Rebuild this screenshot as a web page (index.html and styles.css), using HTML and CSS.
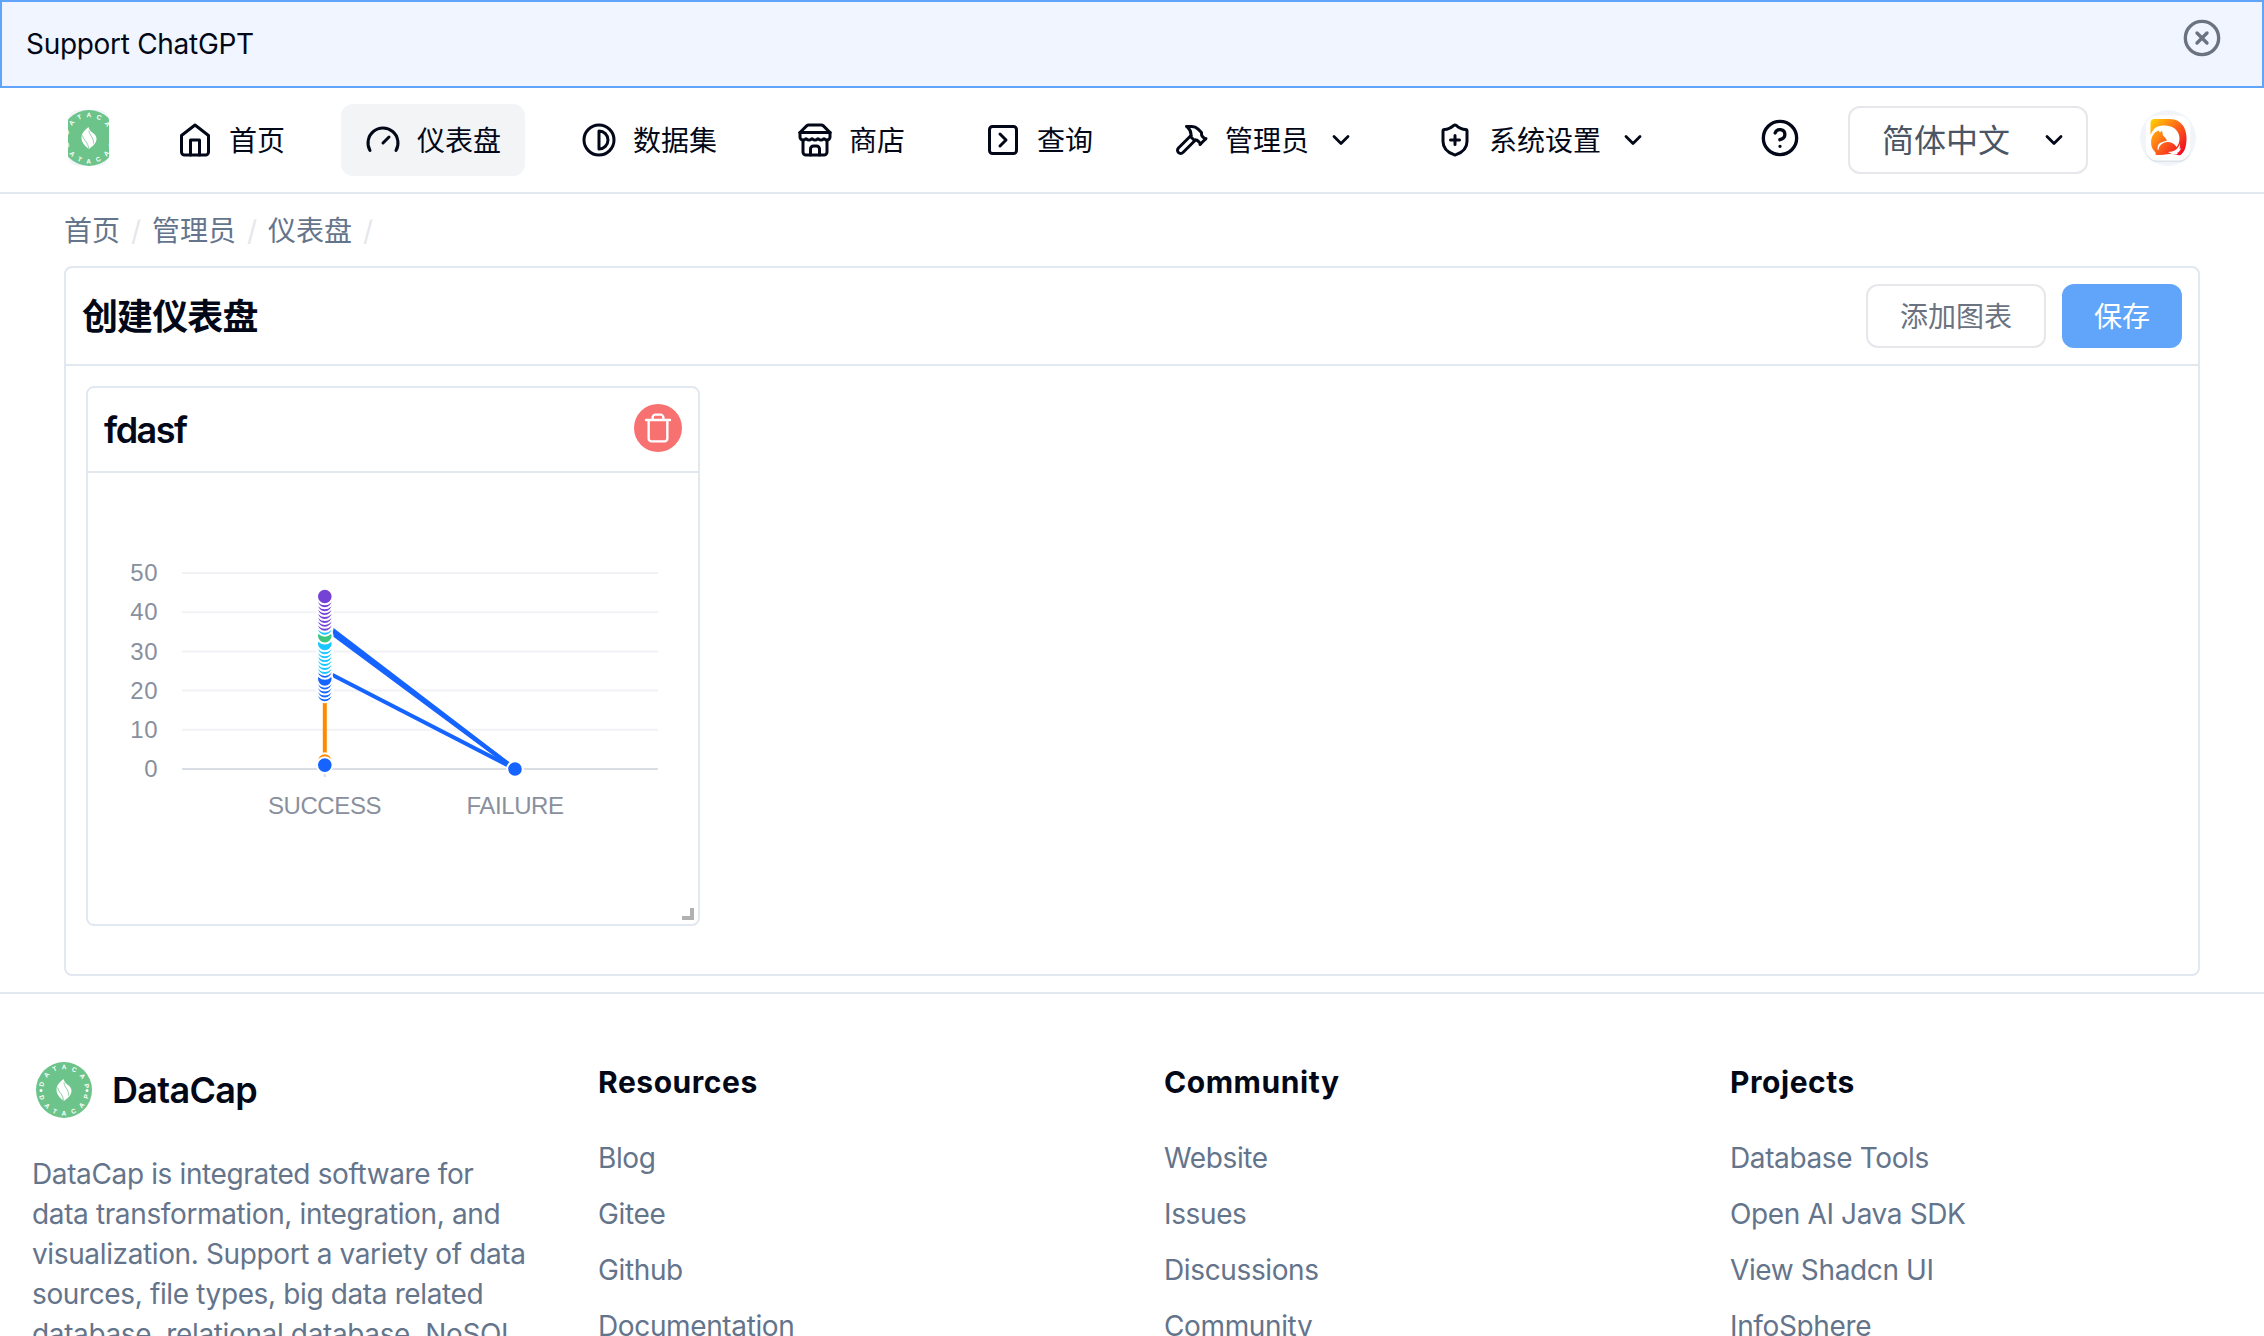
FILE: index.html
```html
<!DOCTYPE html>
<html lang="zh-CN">
<head>
<meta charset="utf-8">
<title>DataCap</title>
<link rel="stylesheet" href="styles.css">
</head>
<body>
<svg class="defs" width="0" height="0" aria-hidden="true">
  <symbol id="logo" viewBox="0 0 56 56">
    <circle cx="28" cy="28" r="28" fill="#6cc48a"/>
    <path id="arc-top" d="M7.2 28a20.8 20.8 0 0 1 41.6 0" fill="none"/>
    <path id="arc-bottom" d="M2.5 28a25.5 25.5 0 0 0 51 0" fill="none"/>
    <text class="logo-ring"><textPath href="#arc-top" startOffset="3" textLength="60">DATACAP</textPath></text>
    <text class="logo-ring"><textPath href="#arc-bottom" startOffset="6" textLength="68">DATACAP</textPath></text>
    <circle cx="5" cy="28.5" r="1.5" fill="#fff"/><circle cx="51" cy="28.5" r="1.5" fill="#fff"/>
    <path d="M27.500 17c-3 2.500-7 6-7 10.500 0 5 3 8 7.500 11.500 3-2.500 7.500-5.500 7.500-10 0-3-1.500-4.500-3.200-5.700-2.300-1.600-4-3.300-4.800-6.300z" fill="#fff"/>
    <path d="M21.500 25.500c1 5 6 7 6 13M28 20.500c0 5 5 6.500 4.500 13" fill="none" stroke="#6cc48a" stroke-width=".8"/>
  </symbol>
  <symbol id="chevron" viewBox="0 0 24 24"><path d="m6 9 6 6 6-6"/></symbol>
</svg>

<div class="banner">
  <span>Support ChatGPT</span>
  <svg class="icon icon-close" viewBox="0 0 24 24"><circle cx="12" cy="12" r="10"/><path d="m15 9-6 6M9 9l6 6"/></svg>
</div>

<header class="topbar">
  <div class="brand"><svg viewBox="0 0 56 56"><use href="#logo"/></svg></div>
  <nav class="nav">
    <a class="nav-item"><svg class="icon" viewBox="0 0 24 24"><path d="m3 9 9-7 9 7v11a2 2 0 0 1-2 2H5a2 2 0 0 1-2-2z"/><path d="M9 22V12h6v10"/></svg>首页</a>
    <a class="nav-item active"><svg class="icon" viewBox="0 0 24 24"><path d="m12 14 4-4"/><path d="M3.340 19a10 10 0 1 1 17.320 0"/></svg>仪表盘</a>
    <a class="nav-item"><svg class="icon" viewBox="0 0 24 24"><circle cx="12" cy="12" r="10"/><path d="M12 18a6 6 0 0 0 0-12v12z"/></svg>数据集</a>
    <a class="nav-item"><svg class="icon" viewBox="0 0 24 24"><path d="m2 7 4.410-4.410A2 2 0 0 1 7.830 2h8.340a2 2 0 0 1 1.420.59L22 7"/><path d="M4 12v8a2 2 0 0 0 2 2h12a2 2 0 0 0 2-2v-8"/><path d="M15 22v-4a2 2 0 0 0-2-2h-2a2 2 0 0 0-2 2v4"/><path d="M2 7h20"/><path d="M22 7v3a2 2 0 0 1-2 2a2.700 2.700 0 0 1-1.590-.63.7.7 0 0 0-.82 0A2.700 2.700 0 0 1 16 12a2.700 2.700 0 0 1-1.590-.63.7.7 0 0 0-.82 0A2.700 2.700 0 0 1 12 12a2.700 2.700 0 0 1-1.590-.63.7.7 0 0 0-.82 0A2.700 2.700 0 0 1 8 12a2.700 2.700 0 0 1-1.590-.63.7.7 0 0 0-.82 0A2.700 2.700 0 0 1 4 12a2 2 0 0 1-2-2V7"/></svg>商店</a>
    <a class="nav-item"><svg class="icon" viewBox="0 0 24 24"><rect width="18" height="18" x="3" y="3" rx="2"/><path d="m10 8 4 4-4 4"/></svg>查询</a>
    <a class="nav-item"><svg class="icon" viewBox="0 0 24 24"><path d="m15 12-8.373 8.373a1 1 0 1 1-3-3L12 9"/><path d="m18 15 4-4"/><path d="m21.500 11.500-1.914-1.914A2 2 0 0 1 19 8.172V7l-2.260-2.260a6 6 0 0 0-4.202-1.756L9 2.960l.92.82A6.180 6.180 0 0 1 12 8.400V10l2 2h1.172a2 2 0 0 1 1.414.586L18.500 14.500"/></svg>管理员<svg class="icon caret"><use href="#chevron"/></svg></a>
    <a class="nav-item"><svg class="icon" viewBox="0 0 24 24"><path d="M20 13c0 5-3.500 7.500-7.660 8.950a1 1 0 0 1-.67-.01C7.500 20.500 4 18 4 13V6a1 1 0 0 1 1-1c2 0 4.500-1.200 6.240-2.720a1.170 1.170 0 0 1 1.520 0C14.510 3.810 17 5 19 5a1 1 0 0 1 1 1z"/><path d="M9 12h6M12 9v6"/></svg>系统设置<svg class="icon caret"><use href="#chevron"/></svg></a>
  </nav>
  <div class="tools">
    <svg class="icon icon-help" viewBox="0 0 24 24"><circle cx="12" cy="12" r="10"/><path d="M9.090 9a3 3 0 0 1 5.830 1c0 2-3 3-3 3M12 17h.01"/></svg>
    <div class="select"><span>简体中文</span><svg class="icon caret"><use href="#chevron"/></svg></div>
    <svg class="avatar" viewBox="0 0 56 56">
      <defs><linearGradient id="fox" gradientUnits="userSpaceOnUse" x1="11" y1="10" x2="46" y2="40"><stop offset="0" stop-color="#ffd000"/><stop offset=".5" stop-color="#ff6a1a"/><stop offset="1" stop-color="#ee0a24"/></linearGradient></defs>
      <circle cx="28" cy="28" r="28" fill="#f1f5f9"/>
      <rect x="5.500" y="7" width="45" height="45" rx="12" fill="#dde2e8"/>
      <rect x="5.500" y="5.500" width="45" height="45" rx="12" fill="#fff"/>
      <path d="M10.500 24V13q0-4 4-4H30c11 0 16.500 9 16.500 19 0 9-2 14-6 17-3 1-5-1-9-1-6 0-9 1-16 1 1-3 0-4-1-6z" fill="url(#fox)"/>
      <path d="M9 27c3-4 4-10 11-11 9-2 19 2 19.500 12 0 4-1 7-3 9-3-5-9-6-13-4-3 1.500-5 4-5 7l-4.500 3L9 40z" fill="#fff"/>
      <path d="M11.500 36c-1-6 0-10 4-14l3-1.500 1.500 2 2-2 1 5c2 2 3 3 4 5l-4.500 1.500c-3 .5-5 3-5 6 0 1.500.5 2.500 1.500 3.500 4-3 7 0 11-2l4 4.500c-6-1-11 1-18 1 1-3-3.500-4-4.500-9z" fill="url(#fox)"/>
      <path d="M28 42c6 0 10-3 12-8 0 3 0 4-1 5l2-1c-1 3-2 4-4 5l1 1c-4 1-7 0-10-2z" fill="#fff"/>
    </svg>
  </div>
</header>

<main class="page">
  <div class="crumbs"><span>首页</span><i>/</i><span>管理员</span><i>/</i><span>仪表盘</span><i>/</i></div>
  <section class="card">
    <div class="card-head">
      <h1 class="title">创建仪表盘</h1>
      <div class="actions"><button class="btn">添加图表</button><button class="btn primary">保存</button></div>
    </div>
    <div class="board">
      <article class="widget">
        <div class="widget-head">
          <h2 class="title">fdasf</h2>
          <button class="remove"><svg class="icon" viewBox="0 0 24 24"><path d="M3 6h18M19 6v14c0 1-1 2-2 2H7c-1 0-2-1-2-2V6M8 6V4c0-1 1-2 2-2h4c1 0 2 1 2 2v2"/></svg></button>
        </div>
        <svg class="chart" width="610" height="450" viewBox="88 473 610 450">
          <g id="grid"></g>
          <g id="lines"></g>
          <g id="points"></g>
          <g class="axis-x"><text x="324.500" y="814">SUCCESS</text><text x="515" y="814">FAILURE</text></g>
        </svg>
        <span class="resize"></span>
      </article>
    </div>
  </section>
</main>

<footer class="footer">
  <div class="col about">
    <div class="about-head"><svg viewBox="0 0 56 56"><use href="#logo"/></svg><strong>DataCap</strong></div>
    <p>DataCap is integrated software for<br>data transformation, integration, and<br>visualization. Support a variety of data<br>sources, file types, big data related<br>database, relational database, NoSQL</p>
  </div>
  <div class="col"><h3>Resources</h3><a>Blog</a><a>Gitee</a><a>Github</a><a>Documentation</a></div>
  <div class="col"><h3>Community</h3><a>Website</a><a>Issues</a><a>Discussions</a><a>Community</a></div>
  <div class="col"><h3>Projects</h3><a>Database Tools</a><a>Open AI Java SDK</a><a>View Shadcn UI</a><a>InfoSphere</a></div>
</footer>
<script src="chart.js"></script>
</body>
</html>
```
FILE: styles.css
```css
* { box-sizing: border-box; }
body {
  margin: 0;
  height: 1336px;
  overflow: hidden;
  background: #fff;
  color: #020817;
  font: 28px/40px Inter, "Noto Sans CJK SC", sans-serif;
}
h1, h2, h3, p { margin: 0; }
svg { display: block; flex: none; }
button { font: inherit; border: 0; padding: 0; }
.defs { position: absolute; }
.icon {
  width: 36px;
  height: 36px;
  fill: none;
  stroke: currentColor;
  stroke-width: 2;
  stroke-linecap: round;
  stroke-linejoin: round;
}
.caret { width: 28px; height: 28px; stroke-width: 2.4; }
.logo-ring { font: 700 6.500px "Liberation Sans", sans-serif; fill: #fff; }

.banner {
  display: flex;
  justify-content: space-between;
  height: 88px;
  padding: 22px 40px 0 24px;
  border: 2px solid #60a5fa;
  background: #f0f5ff;
  letter-spacing: -.3px;
}
.icon-close { width: 40px; height: 40px; margin-top: -6px; color: #6b7280; }

.topbar {
  display: flex;
  align-items: center;
  height: 106px;
  padding: 0 68px;
  border-bottom: 2px solid #e2e8f0;
}
.brand {
  display: flex;
  justify-content: center;
  width: 41px;
  height: 56px;
  margin: -4px 44px 0 0;
  overflow: hidden;
  border-radius: 10px;
  background: #f1f5f9;
}
.brand svg { width: 56px; height: 56px; }
.nav { display: flex; gap: 32px; }
.nav-item {
  display: flex;
  align-items: center;
  gap: 16px;
  height: 72px;
  padding: 2px 24px 0;
  border-radius: 12px;
}
.nav-item .icon { margin-top: -2px; }
.nav-item .caret { margin: -2px 2px 0; }
.active { background: #f3f4f6; }
.tools { display: flex; align-items: center; margin-left: auto; }
.icon-help { width: 40px; height: 40px; margin: -4px 48px 0 0; }
.select {
  display: flex;
  align-items: center;
  justify-content: space-between;
  width: 240px;
  height: 68px;
  padding: 2px 18px 0 32px;
  border: 2px solid #e5e7eb;
  border-radius: 12px;
  font-size: 32px;
}
.select span { color: #4b5563; }
.select .caret { margin-top: -2px; }
.avatar { width: 56px; height: 56px; margin: -4px 0 0 52px; }

.page { padding: 17px 64px 0; height: 798px; }
.crumbs { display: flex; color: #64748b; }
.crumbs i { width: 32px; text-align: center; color: #e5e7eb; font-style: normal; }
.card {
  height: 710px;
  margin-top: 15px;
  border: 2px solid #e2e8f0;
  border-radius: 8px;
}
.card-head {
  display: flex;
  align-items: center;
  justify-content: space-between;
  height: 98px;
  padding: 0 16px;
  border-bottom: 2px solid #e2e8f0;
}
.title { font-size: 36px; line-height: 36px; font-weight: 600; letter-spacing: -.9px; }
.card-head .title { padding-top: 2px; font-weight: 700; }
.widget-head .title { letter-spacing: -1.5px; }
.actions { display: flex; gap: 16px; }
.btn {
  height: 64px;
  padding: 2px 32px 0;
  border: 2px solid #e5e7eb;
  border-radius: 12px;
  background: #fff;
  color: #6b7280;
}
.primary { border: 0; background: #60a5fa; color: #fff; }
.board { padding: 20px; }
.widget {
  position: relative;
  width: 614px;
  height: 540px;
  border: 2px solid #e2e8f0;
  border-radius: 8px;
}
.widget-head {
  display: flex;
  align-items: center;
  justify-content: space-between;
  height: 85px;
  padding: 0 16px;
  border-bottom: 2px solid #e2e8f0;
}
.remove {
  display: flex;
  align-items: center;
  justify-content: center;
  width: 48px;
  height: 48px;
  margin-top: -3px;
  border-radius: 50%;
  background: #f87171;
  color: #fff;
}
.remove .icon { width: 32px; height: 32px; stroke-width: 1.800; }
.resize {
  position: absolute;
  right: 4px;
  bottom: 4px;
  width: 12px;
  height: 12px;
  border: solid #b1b1b1;
  border-width: 0 4px 4px 0;
}
.chart text { font: 24px "Liberation Sans", sans-serif; fill: #89909d; }
.axis-x text { text-anchor: middle; letter-spacing: -.4px; }
#grid text { text-anchor: end; letter-spacing: .5px; }

.footer {
  display: grid;
  grid-template-columns: repeat(4, 566px);
  height: 344px;
  overflow: hidden;
  border-top: 2px solid #e2e8f0;
  color: #64748b;
  letter-spacing: -.37px;
}
.col { display: flex; flex-direction: column; gap: 16px; padding: 68px 32px 0; }
.col h3 {
  margin-bottom: 20px;
  color: #020817;
  font-size: 30px;
  font-weight: 650;
  line-height: 40px;
  letter-spacing: .55px;
}
.about-head { display: flex; align-items: center; gap: 20px; padding-left: 4px; color: #020817; }
.about-head svg { width: 56px; height: 56px; }
.about-head strong { font-size: 36px; font-weight: 600; letter-spacing: -.7px; }
.about { gap: 36px; }
.about p { white-space: nowrap; }
```
FILE: chart.js
```js
const NS = 'http://www.w3.org/2000/svg';
const COLORS = { blue: '#1664ff', orange: '#ff8a00', cyan: '#1ac6ff', green: '#3cc780', purple: '#7442d4' };
const X0 = 324.8, X1 = 515;
const y = v => 769 - v * 3.92;

function add(parent, tag, attrs, text) {
  const el = document.createElementNS(NS, tag);
  for (const k in attrs) el.setAttribute(k, attrs[k]);
  if (text !== undefined) el.textContent = text;
  document.getElementById(parent).appendChild(el);
}

for (let v = 0; v <= 50; v += 10) {
  add('grid', 'line', { x1: 182, x2: 658, y1: y(v), y2: y(v), stroke: v ? '#f1f2f5' : '#d9dde4', 'stroke-width': 2 });
  add('grid', 'text', { x: 158, y: y(v) + 8.2 }, v);
}
[X0, X1].forEach(x => add('grid', 'line', { x1: x, x2: x, y1: 769, y2: 777, stroke: '#d9dde4', 'stroke-width': 2 }));

add('lines', 'line', { x1: X0, x2: X0, y1: y(19), y2: y(2), stroke: COLORS.orange, 'stroke-width': 4 });
[37, 36, 25].forEach(v => add('lines', 'line', { x1: X0, x2: X1, y1: y(v), y2: y(0), stroke: COLORS.blue, 'stroke-width': 4 }));

const series = [[2, 'orange'], [1, 'blue']];
[19, 20, 21, 22, 23, 25].forEach(v => series.push([v, 'blue']));
[26, 27, 28, 29, 30, 31, 32].forEach(v => series.push([v, 'cyan']));
series.push([34, 'green'], [36, 'cyan']);
for (let v = 37; v <= 44; v++) series.push([v, 'purple']);

const dot = (x, v, c) => add('points', 'circle', { cx: x, cy: y(v), r: 7.8, fill: COLORS[c], stroke: '#fff', 'stroke-width': 2 });
series.forEach(([v, c]) => dot(X0, v, c));
dot(X1, 0, 'blue');
```
